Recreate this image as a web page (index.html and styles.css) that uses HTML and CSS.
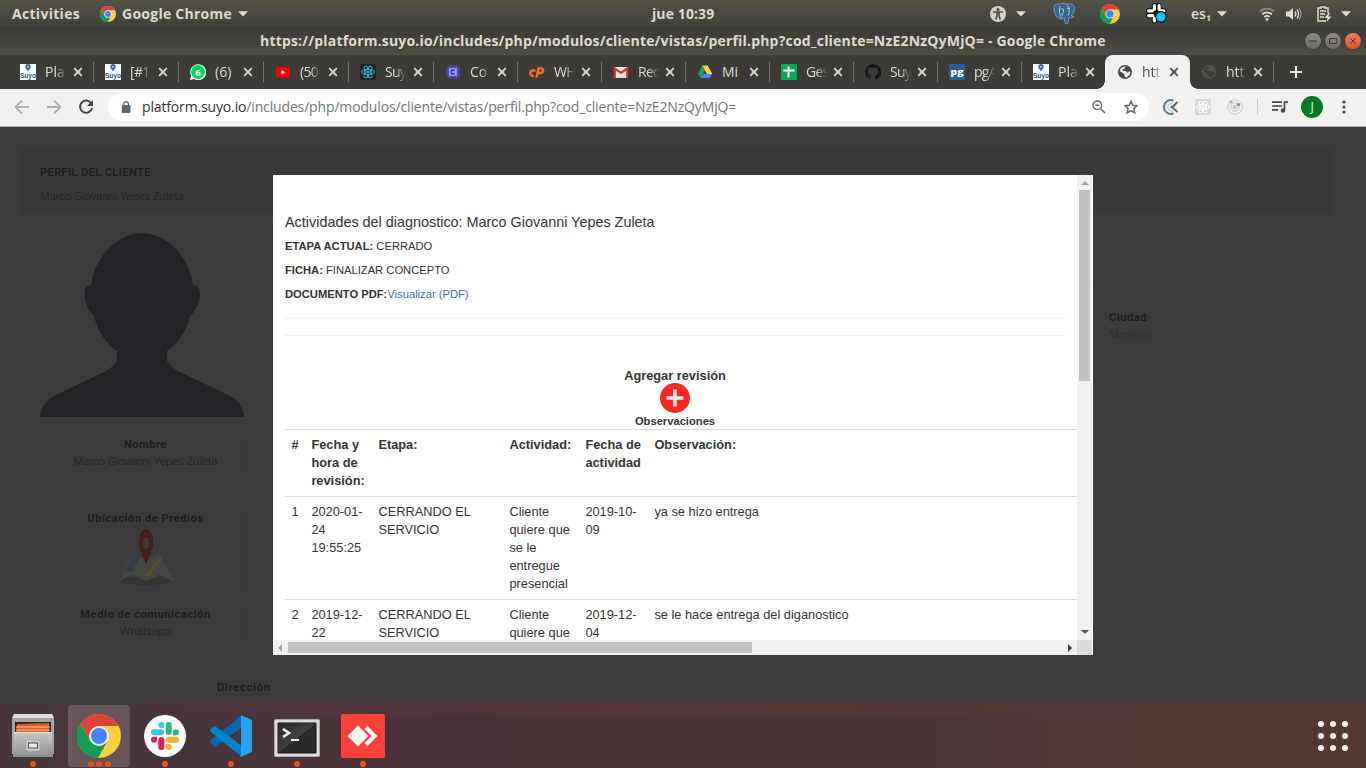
FILE: index.html
```html
<!DOCTYPE html>
<html lang="es">
<head>
<meta charset="utf-8">
<title>Perfil del cliente</title>
<link rel="stylesheet" href="styles.css">
</head>
<body>
<svg class="defs" width="0" height="0">
  <symbol id="chrome" viewBox="2 2 44 44"><circle cx="24" cy="24" r="22" fill="#ffcd40"/><path d="M5.500 12A22 22 0 0 0 22.900 46L32.660 29 24 24 15.340 29Z" fill="#109d58"/><path d="M5.500 12A22 22 0 0 1 43.600 14H24L15.340 29Z" fill="#db4437"/><circle cx="24" cy="24" r="10" fill="#f4f4f4"/><circle cx="24" cy="24" r="8" fill="#4285f4"/></symbol>
  <symbol id="close" viewBox="0 0 10 10"><path d="M1.200 1.200l7.600 7.600M8.800 1.200L1.200 8.800" stroke="currentColor" stroke-width="1.800" fill="none"/></symbol>
  <symbol id="down" viewBox="0 0 10 6"><path d="M0 .3h10L5 5.500z" fill="currentColor"/></symbol>
  <symbol id="globe" viewBox="0 0 16 16"><circle cx="8" cy="8" r="7" fill="currentColor"/><path d="M8.600 2.500c-1 1-.3 1.700-1.500 2.200C6 5.300 5.500 5.700 5.600 6.900h3c1 .2.700 1.600 1.800 1.700 1.100 0 .6-1.300 1.900-1.400l1.200 1.100C13 11 11 13.300 8.200 13.500v-1.400c-1.300 0-1-1.200-.8-2.200L2.600 7C3.200 4.500 5.400 2.300 8.600 2.500z" fill="var(--hole)"/></symbol>
  <symbol id="suyo" viewBox="0 0 16 16"><path fill="#fff" d="M0 0h16v16H0z"/><path d="M8 0a2.700 2.700 0 0 1 2.700 2.700C10.700 4.500 8 7 8 7S5.300 4.500 5.300 2.700A2.700 2.700 0 0 1 8 0z" fill="#3565ad"/><circle cx="8" cy="2.700" r="1" fill="#b9cdec"/><text x="0" y="13.700" textLength="16" lengthAdjust="spacingAndGlyphs" font-family="Liberation Sans" font-weight="700" font-size="8" fill="#20519f">Suyo</text></symbol>
  <symbol id="atom" viewBox="0 0 16 16"><g fill="none" stroke="currentColor" stroke-width=".9"><ellipse cx="8" cy="8" rx="6.500" ry="2.500"/><ellipse cx="8" cy="8" rx="6.500" ry="2.500" transform="rotate(60 8 8)"/><ellipse cx="8" cy="8" rx="6.500" ry="2.500" transform="rotate(120 8 8)"/></g><circle cx="8" cy="8" r="1.300" fill="currentColor"/></symbol>
</svg>

<header class="panel">
  <span class="activities">Activities</span>
  <svg class="panel-chrome"><use href="#chrome"/></svg>
  <span class="app-name">Google Chrome</span>
  <svg class="caret"><use href="#down"/></svg>
  <span class="clock">jue 10:39</span>
  <svg class="access" viewBox="0 0 16 16"><circle cx="8" cy="8" r="8" fill="#d5d2cc"/><circle cx="8" cy="3.500" r="1.500" fill="#494741"/><path d="M3.500 6h9M7 6.500v3L6 13M9 6.500v3l1 3.500" stroke="#494741" stroke-width="1.600" fill="none" stroke-linecap="round"/></svg>
  <svg class="caret c2"><use href="#down"/></svg>
  <svg class="pg" viewBox="0 0 22 22"><path d="M7 1C3 .5 1 2 1 5c0 3 1.300 8 3.500 9.500 1.500.8 2.500-1 3.500-2l.6 2.200-2 .8c1.700 1.200 3.800.2 4.800-.7.300 2 .200 6.200 2 6.200 2.200 0 2-3.500 2.200-6.500 1 .9 4.800.4 5.400-1.200l-2.800-.3C20.800 10.500 22 6 21 3.500 19.500.5 15.500.5 13.500 1 11 .2 9 .4 7 1z" fill="#336791" stroke="#b4c3d0" stroke-width=".6"/><path d="M7.700 12.500c-2-2.500-1.500-6-.7-9.500M13.500 1.500c3 2.500 3.500 7 1.800 11M7.500 6c2-1 3.200.2 3 2.500-.2 1.500-1.500 2-1.200 4M14 5.500l2.700.3" fill="none" stroke="#d5dfe7" stroke-width=".8"/></svg>
  <svg class="tray-chrome"><use href="#chrome"/></svg>
  <svg class="tray-slack" viewBox="0 0 20 20"><g stroke="#111" stroke-width="5" stroke-linecap="round"><path d="M8 2.500V8M2.500 7.500H5M12 7V2.500M12.500 7.500H17M2.500 12H7.500M8 12.500V17"/></g><g stroke="#fff" stroke-width="3" stroke-linecap="round"><path d="M8 2.500V6M2.500 7.500H6M12.500 6V2.500M14.500 7.500H17M2.500 12H6.500M8 14.500V17"/></g><circle cx="14.300" cy="13.200" r="5" fill="#10c8f5" stroke="#111"/></svg>
  <span class="lang">es₁</span>
  <svg class="caret c3"><use href="#down"/></svg>
  <svg class="wifi" viewBox="0 0 16 14"><g fill="none" stroke-width="1.800"><path d="M1 4.500a10 10 0 0 1 14 0" stroke="#8d8a84"/><path d="M3.200 7.300a7 7 0 0 1 9.600 0M5.300 10a4 4 0 0 1 5.400 0" stroke="#dfdbd2"/></g><circle cx="8" cy="12.500" r="1.400" fill="#dfdbd2"/></svg>
  <svg class="vol" viewBox="0 0 16 14"><path d="M0 4.500h3L7 1v12L3 9.500H0z" fill="#dfdbd2"/><g fill="none" stroke="#dfdbd2" stroke-width="1.300"><path d="M9 4.500q1.800 2.500 0 5M11 2.500q3 4.500 0 9"/><path d="M13 1q3.800 6 0 12" stroke="#908d87"/></g></svg>
  <svg class="bat" viewBox="0 0 15 16"><path d="M11 7V2H8V1H4v1H1v13h8" fill="none" stroke="#dfdbd2" stroke-width="1.500"/><path d="M3 5h6M3 8h5M3 11h4" stroke="#dfdbd2" stroke-width="1.500"/><path d="M11.500 7L7.500 12h3l-1 4 5-5.500h-3.200L13 7z" fill="#dfdbd2"/></svg>
  <svg class="caret c4"><use href="#down"/></svg>
</header>

<div class="titlebar">
  <span class="title">https://platform.suyo.io/includes/php/modulos/cliente/vistas/perfil.php?cod_cliente=NzE2NzQyMjQ= - Google Chrome</span>
  <div class="wm">
    <i class="wm-btn"><svg viewBox="0 0 16 16"><path d="M4 8h8"/></svg></i>
    <i class="wm-btn"><svg viewBox="0 0 16 16"><path d="M4.500 5.500h7v5h-7z"/></svg></i>
    <i class="wm-btn wm-close"><svg viewBox="0 0 16 16"><path d="M5.200 5.200l5.600 5.600M10.800 5.200l-5.600 5.600"/></svg></i>
  </div>
</div>

<nav class="tabs">
  <div class="tab wide first"><svg class="fav"><use href="#suyo"/></svg><span class="label">Pla</span><svg class="x"><use href="#close"/></svg></div>
  <div class="tab wide"><svg class="fav"><use href="#suyo"/></svg><span class="label tight">[#1</span><svg class="x"><use href="#close"/></svg></div>
  <div class="tab wide"><svg class="fav" viewBox="0 0 16 16"><path d="M0 16l1.200-4A8 8 0 1 1 4 15z" fill="#fff"/><circle cx="8" cy="8" r="6.900" fill="#05d85e"/><text x="5.300" y="11.500" font-family="Open Sans" font-size="9.500" font-weight="700" fill="#fff">6</text></svg><span class="label solid">(6)</span><svg class="x"><use href="#close"/></svg></div>
  <div class="tab wide"><svg class="fav" viewBox="0 0 16 16"><rect x="1" y="3" width="14" height="10.500" rx="2.300" fill="#f00"/><path d="M6.500 6v4.500l4-2.250z" fill="#fff"/></svg><span class="label tight">(50</span><svg class="x"><use href="#close"/></svg></div>
  <div class="tab wide"><svg class="fav react" viewBox="0 0 16 16"><rect width="16" height="16" rx="1.500" fill="#20242a"/><use href="#atom"/></svg><span class="label tight">Suy</span><svg class="x"><use href="#close"/></svg></div>
  <div class="tab"><svg class="fav" viewBox="0 0 16 16"><g fill="none" stroke="#5650d8"><path d="M4.500 1v14M6.800 1v14M9.200 1v14M11.500 1v14M1 4.500h14M1 6.800h14M1 9.200h14M1 11.500h14" stroke-width=".9"/><rect x="3.500" y="3.500" width="9" height="9" rx="1" fill="#a5a3f2" stroke-width="1.700"/><path d="M9.700 6.300H6.500v3.400h3.200" stroke="#302ba9" stroke-width="1.500"/></g></svg><span class="label">Co</span><svg class="x"><use href="#close"/></svg></div>
  <div class="tab"><svg class="fav" viewBox="0 0 16 16"><path d="M6.500 6.500H4C.500 6.500.500 12 3.500 12h1.200M7.300 13.500L9.700 4.200h2c3.700 0 3 4.800-.5 4.800H9.500" fill="none" stroke="#ff6c2c" stroke-width="2.400"/></svg><span class="label tight">WH</span><svg class="x"><use href="#close"/></svg></div>
  <div class="tab"><svg class="fav" viewBox="0 0 16 16"><path d="M1 3h14v11H1z" fill="#eee"/><path d="M1.800 14V4.500L8 9l6.200-4.500V14" fill="none" stroke="#d9332a" stroke-width="2.200"/><path d="M3 14L8 9.500l5 4.500z" fill="#dedede"/></svg><span class="label tight">Rec</span><svg class="x"><use href="#close"/></svg></div>
  <div class="tab"><svg class="fav" viewBox="0 0 16 16"><path d="M5.300 1.500L8 6 3.700 14 1 9.800z" fill="#11a861"/><path d="M5.300 1.500h5.400L15.300 10H10z" fill="#ffd04b"/><path d="M3.700 14L6.200 10h9L12.800 14z" fill="#4688f4"/></svg><span class="label solid">Mi</span><svg class="x"><use href="#close"/></svg></div>
  <div class="tab"><svg class="fav" viewBox="0 0 16 16"><rect width="16" height="16" rx="1" fill="#0aa85c"/><path d="M7.500 2.500v11M2.500 6.500h11" stroke="#fff" stroke-width="2"/></svg><span class="label tight">Ges</span><svg class="x"><use href="#close"/></svg></div>
  <div class="tab"><svg class="fav" viewBox="0 0 16 16"><path d="M8 0a8 8 0 0 0-2.500 15.600c.4.100.5-.2.500-.4v-1.500c-2.200.5-2.700-1-2.700-1-.4-.9-.9-1.100-.9-1.100-.7-.5.100-.5.100-.5.800.1 1.200.8 1.200.8.700 1.300 1.900.9 2.400.7 0-.5.300-.9.500-1.100-1.800-.2-3.600-.9-3.600-4 0-.8.300-1.500.8-2.100-.1-.2-.4-1 .1-2.100 0 0 .7-.2 2.200.8a7.700 7.700 0 0 1 4 0c1.500-1 2.200-.8 2.200-.8.500 1.100.2 1.900.1 2.100.5.600.8 1.300.8 2.100 0 3.100-1.900 3.800-3.700 4 .3.300.6.800.6 1.500v2.200c0 .2.100.5.500.4A8 8 0 0 0 8 0z" fill="#15181a"/></svg><span class="label tight">Suy</span><svg class="x"><use href="#close"/></svg></div>
  <div class="tab"><svg class="fav" viewBox="0 0 16 16"><rect width="16" height="16" rx="1.500" fill="#2c5d99"/><text x="1.500" y="10.500" font-family="Open Sans" font-size="9.500" font-weight="800" textLength="13" lengthAdjust="spacingAndGlyphs" fill="#fff">pg</text></svg><span class="label tight">pgA</span><svg class="x"><use href="#close"/></svg></div>
  <div class="tab"><svg class="fav"><use href="#suyo"/></svg><span class="label">Pla</span><svg class="x"><use href="#close"/></svg></div>
  <div class="tab active"><svg class="fav globe"><use href="#globe"/></svg><span class="label">htt</span><svg class="x"><use href="#close"/></svg></div>
  <div class="tab after"><svg class="fav globe"><use href="#globe"/></svg><span class="label">htt</span><svg class="x"><use href="#close"/></svg></div>
  <div class="newtab"><svg viewBox="0 0 12 12"><path d="M6 0v12M0 6h12" stroke="#e7e5e1" stroke-width="2"/></svg></div>
</nav>

<div class="toolbar">
  <svg class="nav" viewBox="0 0 16 16"><path d="M15 8H2M8 1.500L1.500 8 8 14.500"/></svg>
  <svg class="nav" viewBox="0 0 16 16"><path d="M1 8h13M8 1.500L14.500 8 8 14.500"/></svg>
  <svg class="nav reload" viewBox="0 0 16 16"><path d="M13.200 4.200A6.100 6.100 0 1 0 14.100 9"/><path d="M15 1v6H9z" fill="#454545" stroke="none"/></svg>
  <div class="omnibox">
    <svg class="lock" viewBox="0 0 10 12"><rect x=".8" y="4" width="8.600" height="8" rx="1" fill="#5f6368"/><path d="M2.800 5V3a2.300 2.300 0 0 1 4.600 0v2" fill="none" stroke="#5f6368" stroke-width="1.200"/></svg>
    <span class="url"><b>platform.suyo.io</b>/includes/php/modulos/cliente/vistas/perfil.php?cod_cliente=NzE2NzQyMjQ=</span>
    <svg class="lens" viewBox="0 0 14 14"><circle cx="5.300" cy="5.300" r="4.300"/><path d="M8.500 8.500L13 13M3.300 5.300h4"/></svg>
    <svg class="star" viewBox="0 0 14 14"><path d="M7 1.200l1.700 4.100 4.400.4-3.300 2.900 1 4.300L7 10.600l-3.800 2.300 1-4.300L.9 5.700l4.400-.4z"/></svg>
  </div>
  <svg class="ext1" viewBox="0 0 16 16"><path d="M10.500 1.500A7 7 0 1 0 10.500 14.500" fill="none" stroke="#5b7885" stroke-width="2"/><path d="M10 4.200A4 4 0 1 0 10 11.800" fill="none" stroke="#b4c1c7" stroke-width="1"/><path d="M14.500 3L9.500 8M14.500 13L10 9" stroke="#4e6975" stroke-width="1.900"/><circle cx="9" cy="8" r="1.600" fill="#4e6975"/></svg>
  <svg class="ext2" viewBox="0 0 16 16"><path d="M0 0h16v16H0z" fill="#d8d8d8"/><use href="#atom"/></svg>
  <svg class="ext3" viewBox="0 0 16 16"><g fill="none" stroke="#c7c7c7"><circle cx="8" cy="8" r="7.300"/><circle cx="8" cy="8" r="4.300"/></g><circle cx="8" cy="8" r="2.500" fill="#ccc"/><circle cx="4" cy="3" r="1.500" fill="#aaa"/><circle cx="11.500" cy="5.500" r="1.600" fill="#888"/></svg>
  <i class="divider"></i>
  <svg class="queue" viewBox="0 0 16 12"><path d="M0 1.200h10M0 5h10M0 8.800h6M16 1.200h-3.500v8" fill="none" stroke="#454545" stroke-width="1.700"/><circle cx="11" cy="9.500" r="2.200" fill="#454545"/></svg>
  <span class="profile">J</span>
  <svg class="menu" viewBox="0 0 4 14"><circle cx="2" cy="2" r="1.600"/><circle cx="2" cy="7" r="1.600"/><circle cx="2" cy="12" r="1.600"/></svg>
</div>

<main class="page">
  <section class="band"><h1>PERFIL DEL CLIENTE</h1><p>Marco Giovanni Yepes Zuleta</p></section>
  <div class="content">
    <aside class="side">
      <svg class="avatar" viewBox="0 0 204 184"><path d="M102 0C125 0 149 22 153 52c5 0 7 4 7 11-1 8-5 16-10 20-3 14-12 28-23 35v10c5 6 7 8 13 11l48 23c11 5 15 12 16 22v10H0v-10c1-10 5-16 16-22l48-23c6-3 8-5 13-11v-10C66 111 57 97 54 83c-5-4-9-12-9-20-1-7 1-11 6-11C55 22 79 0 102 0z" fill="#222327"/></svg>
      <div class="field name"><strong>Nombre</strong><span>Marco Giovanni Yepes Zuleta</span></div>
      <i class="rule"></i>
      <div class="field place"><strong>Ubicación de Predios</strong>
        <svg class="map" viewBox="0 0 56 60"><ellipse cx="28" cy="53" rx="26" ry="4" fill="#353535"/><path d="M14 27L28 30 42 26 55 53 42 47 28 53 14 47 1 53z" fill="#454743"/><path d="M14 27l8 1-6 15-9 2z" fill="#353c46"/><path d="M22 30l6 3v19L14 46z" fill="#434940"/><path d="M28 30l14-3 13 26-13-6-14 6z" fill="#454541"/><path d="M43 31L28 49" stroke="#594e2d" stroke-width="3" stroke-dasharray="4 1"/><path fill-rule="evenodd" d="M28 1c4 0 7 5 7 14 0 7-4 14-7 21-3-7-7-14-7-21 0-9 3-14 7-14zm0 8c-2 0-3 2-3 6s1 6 3 6 3-2 3-6-1-6-3-6z" fill="#431e1f"/></svg>
      </div>
      <div class="field medium"><strong>Medio de comunicación</strong><span>Whatsapp</span></div>
    </aside>
    <div class="city-col">
      <i class="rule"></i>
      <div class="city"><strong>Ciudad</strong><span>Medellín</span></div>
    </div>
  </div>
  <strong class="address">Dirección</strong>

  <div class="modal">
    <div class="modal-body">
      <h2>Actividades del diagnostico: Marco Giovanni Yepes Zuleta</h2>
      <p><b>ETAPA ACTUAL:</b> CERRADO</p>
      <p><b>FICHA:</b> FINALIZAR CONCEPTO</p>
      <p><b>DOCUMENTO PDF:</b><a>Visualizar (PDF)</a></p>
      <hr><hr>
      <div class="add">
        <strong>Agregar revisión</strong>
        <svg viewBox="0 0 30 30"><circle cx="15" cy="15" r="15" fill="#fb2722"/><path d="M15 6.500v17M6.500 15h17" stroke="#f3ecec" stroke-width="3.600"/></svg>
        <b>Observaciones</b>
      </div>
      <table>
        <colgroup><col class="c-num"><col class="c-date"><col class="c-stage"><col class="c-act"><col class="c-adate"><col></colgroup>
        <tr><th>#</th><th>Fecha y hora de revisión:</th><th>Etapa:</th><th>Actividad:</th><th>Fecha de actividad</th><th>Observación:</th></tr>
        <tr><td>1</td><td>2020-01-24 19:55:25</td><td>CERRANDO EL SERVICIO</td><td>Cliente quiere que se le entregue presencial</td><td>2019-10-09</td><td>ya se hizo entrega</td></tr>
        <tr><td>2</td><td>2019-12-22</td><td>CERRANDO EL SERVICIO</td><td>Cliente quiere que</td><td>2019-12-04</td><td>se le hace entrega del diganostico</td></tr>
      </table>
    </div>
    <div class="vbar"><svg viewBox="0 0 8 4"><path d="M0 4h8L4 0z" fill="#a3a3a3"/></svg><i></i><svg class="end" viewBox="0 0 8 4"><path d="M0 0h8L4 4z" fill="#505050"/></svg></div>
    <div class="hbar"><svg viewBox="0 0 4 8"><path d="M4 0v8L0 4z" fill="#a3a3a3"/></svg><i></i><svg class="end" viewBox="0 0 4 8"><path d="M0 0v8l4-4z" fill="#404040"/></svg></div>
    <div class="corner"></div>
  </div>
</main>

<footer class="dock">
  <div class="app"><svg viewBox="0 0 44 44"><defs><linearGradient id="g" x2="0" y2="1"><stop stop-color="#c9c9c9"/><stop offset="1" stop-color="#8f8f8f"/></linearGradient></defs><path d="M3 0h38l2 5v35H1V5z" fill="#a5a5a5"/><path d="M3 0h38l2 4H1z" fill="#ddd"/><path d="M4 8h36v11H4z" fill="#292522"/><path d="M6 10l32-1v9H5z" fill="#d95d24"/><path d="M5 13h34" stroke="#ffc583"/><path d="M5 16h34" stroke="#ffe0b8" stroke-width=".8"/><path d="M3 18h38l1 25H2z" fill="url(#g)"/><path d="M3 18.500h38" stroke="#e4e4e4"/><rect x="15" y="26" width="14" height="11" rx="2" fill="#cdcdcd" stroke="#aaa" stroke-width=".6"/><rect x="17.500" y="29" width="9" height="5" fill="#eee" stroke="#444"/></svg><i class="dots"><b></b></i></div>
  <div class="app selected"><svg><use href="#chrome"/></svg><i class="dots"><b></b><b></b><b></b></i></div>
  <div class="app"><svg viewBox="0 0 44 44"><circle cx="22" cy="22" r="21" fill="#fff"/><g stroke-width="6" stroke-linecap="round"><path d="M11 18.300h7M18.300 11v0" stroke="#36c5f0"/><path d="M25.700 11v7M33 18.300v0" stroke="#2eb67d"/><path d="M26 25.700h7M25.700 33v0" stroke="#ecb22e"/><path d="M18.300 26v7M11 25.700v0" stroke="#e01e5a"/></g><path d="M18.300 11h3v3h-3z" fill="#36c5f0"/><path d="M30 18.300h3v3h-3z" fill="#2eb67d"/><path d="M22.700 30h3v3h-3z" fill="#ecb22e"/><path d="M11 22.700h3v3h-3z" fill="#e01e5a"/></svg><i class="dots"><b></b></i></div>
  <div class="app"><svg viewBox="0 0 44 44"><path d="M33 1v12L6 33l-4-4c-1-1-1-2 0-3z" fill="#0069b3"/><path d="M1 15l5-3 27 20v11L2 18c-1-1-1-2-1-3z" fill="#0083cd"/><path d="M32 1l11 5v32l-11 5c-1 0-1-1 0-2V3z" fill="#27a2ee"/></svg><i class="dots"><b></b></i></div>
  <div class="app"><svg viewBox="0 0 46 44"><defs><linearGradient id="t" x2="1" y2="1"><stop stop-color="#2b2b2b"/><stop offset=".5" stop-color="#414141"/><stop offset=".51" stop-color="#292929"/></linearGradient></defs><rect x=".5" y="5.500" width="45" height="37" rx="1" fill="#dcdcdc" stroke="#aaa"/><path d="M4 9h38v30H4z" fill="url(#t)" stroke="#171717"/><path d="M9 15l6 4-6 4" fill="none" stroke="#eee" stroke-width="2.700"/><path d="M17 26h8" stroke="#eee" stroke-width="2"/></svg><i class="dots"><b></b></i></div>
  <div class="app"><svg viewBox="0 0 44 44"><rect width="44" height="44" rx="2.500" fill="#fe4139"/><path d="M17 11.500L27.500 22 17 32.500 6.500 22z" fill="#fff"/><path d="M25 13.500l8.500 8.500-8.500 8.500" fill="none" stroke="#fff" stroke-width="4"/></svg><i class="dots"><b></b></i></div>
  <div class="grid"><b></b><b></b><b></b><b></b><b></b><b></b><b></b><b></b><b></b></div>
</footer>
</body>
</html>
```
FILE: styles.css
```css
* { box-sizing: border-box; }
body { margin: 0; width: 1366px; height: 768px; overflow: hidden; background: #3c3c3c; font-family: "Liberation Sans", Arial, sans-serif; display: flex; flex-direction: column; }
svg { display: block; flex: none; }
.defs { display: none; }

/* Desktop panel */
.panel { height: 27px; flex: none; display: flex; align-items: center; background: linear-gradient(#55524b, #403f3a); color: #dfdbd2; font: 700 14px "Open Sans", sans-serif; white-space: nowrap; }
.panel span { line-height: 27px; flex: none; }
.activities { width: 88px; padding-left: 12px; letter-spacing: .3px; }
.panel-chrome { width: 16px; height: 16px; margin-left: 12px; }
.app-name { margin-left: 6px; width: 111px; letter-spacing: .25px; }
.caret { width: 10px; height: 6px; margin-left: 5px; }
.clock { width: 64px; margin-left: 404px; letter-spacing: .1px; }
.access { width: 16px; height: 16px; margin-left: 274px; }
.c2 { margin-left: 10px; }
.pg { width: 22px; height: 22px; margin-left: 27px; }
.tray-chrome { width: 20px; height: 20px; margin-left: 25px; }
.tray-slack { width: 21px; height: 21px; margin-left: 26px; }
.lang { width: 22px; margin-left: 24px; font-weight: 600; }
.c3 { margin-left: 4px; }
.wifi { width: 16px; height: 14px; margin-left: 32px; }
.vol { width: 16px; height: 14px; margin-left: 11px; }
.bat { width: 15px; height: 16px; margin-left: 15px; }
.c4 { margin-left: 9px; }

/* Window title */
.titlebar { height: 28px; flex: none; display: flex; align-items: center; padding-left: 260px; background: linear-gradient(#3b3a36, #4e4b45); color: #dfdbd2; }
.title { width: 1045px; font: 700 14px/28px "Open Sans", sans-serif; letter-spacing: .19px; white-space: nowrap; }
.wm { display: flex; gap: 4px; }
.wm-btn { width: 16px; height: 16px; border-radius: 50%; background: linear-gradient(#8d8b86, #6c6963); box-shadow: 0 0 0 .5px #302f2c; }
.wm-btn path { fill: none; stroke: #3c3b37; }
.wm-close { background: linear-gradient(#f37e57, #e1501e); }

/* Tabs */
.tabs { height: 34px; flex: none; padding-left: 8px; display: flex; background: #3c3b37; color: #dfdedb; }
.tab { position: relative; width: 84px; display: flex; align-items: center; padding-left: 12px; }
.tab.wide { width: 85px; }
.tab::before { content: ""; position: absolute; left: 0; top: 7px; width: 1px; height: 20px; background: #75736f; }
.first::before, .active::before, .after::before { display: none; }
.fav { width: 16px; height: 16px; }
.react { color: #35b8d8; }
.label { width: 21px; height: 34px; margin-left: 9px; overflow: hidden; white-space: nowrap; font: 14px/34px "Open Sans", sans-serif; -webkit-mask-image: linear-gradient(90deg, #000 50%, transparent); mask-image: linear-gradient(90deg, #000 50%, transparent); }
.label.solid { -webkit-mask-image: none; mask-image: none; }
.label.tight { letter-spacing: -.7px; }
.x { width: 10px; height: 10px; margin-left: 6px; }
.wide .x { margin-left: 7px; }
.tab.active { width: 85px; background: #f2f1f0; border-radius: 8px 8px 0 0; color: #4b4a48; }
.globe { color: #4b4a48; --hole: #f2f1f0; }
.after .globe { color: #50504d; --hole: #3c3b37; }
.after { width: 83px; padding-left: 11px; }
.active::after { content: ""; position: absolute; bottom: 0; left: -8px; width: 101px; height: 8px; background: radial-gradient(circle at 0 0, transparent 7.5px, #f2f1f0 8px) left / 8px 8px no-repeat, radial-gradient(circle at 100% 0, transparent 7.5px, #f2f1f0 8px) right / 8px 8px no-repeat; }
.newtab { display: flex; align-items: center; padding-left: 16px; border-left: 1px solid #75736f; height: 20px; margin-top: 7px; }
.newtab svg { width: 12px; height: 12px; }

/* Address bar */
.toolbar { height: 38px; flex: none; display: flex; align-items: center; padding: 0 0 2px 14px; background: #f2f1f0; border-bottom: 1px solid #b8b6b3; }
.nav { width: 16px; height: 16px; margin-right: 16px; fill: none; stroke: #b0afae; stroke-width: 1.9; }
.reload { stroke: #454545; margin-right: 14px; }
.omnibox { width: 1041px; height: 28px; border-radius: 14px; background: #fff; display: flex; align-items: center; padding-left: 13px; }
.lock { width: 10px; height: 12px; }
.url { width: 950px; margin-left: 11px; font: 14px/28px "Open Sans", sans-serif; letter-spacing: -.15px; color: #70757a; white-space: nowrap; }
.url b { font-weight: 400; color: #303134; }
.lens, .star { width: 14px; height: 14px; fill: none; stroke: #5f6368; stroke-width: 1.4; }
.star { margin-left: 18px; }
.ext1 { width: 16px; height: 16px; margin-left: 14px; }
.ext2 { width: 16px; height: 16px; margin-left: 16px; color: #fff; }
.ext3 { width: 16px; height: 16px; margin-left: 16px; }
.divider { width: 1px; height: 16px; margin-left: 14px; background: #ccc; }
.queue { width: 16px; height: 12px; margin-left: 14px; }
.profile { width: 22px; height: 22px; margin-left: 13px; border-radius: 50%; background: #067a27; color: #fff; font: 12px/22px "Open Sans", sans-serif; text-align: center; }
.menu { width: 4px; height: 14px; margin-left: 19px; fill: #454545; }

/* Dimmed profile page */
.page { position: relative; height: 576px; flex: none; padding: 21px 35px 0 20px; background: #3c3c3c; color: #202020; font: 300 11.2px/17px Roboto, sans-serif; }
.page strong { font-weight: 700; color: #1e1e1e; letter-spacing: .5px; }
.band { height: 65px; background: #393939; padding: 16px 20px 0; }
.band h1 { margin: 0; font-size: 11.2px; line-height: 17px; font-weight: 600; color: #1d1d1d; letter-spacing: .32px; }
.band p { margin: 7px 0 0; letter-spacing: .06px; }
.content { display: flex; justify-content: space-between; padding: 20px 0 0 20px; }
.side { width: 204px; }
.avatar { width: 204px; height: 184px; }
.field { margin-left: 8px; width: 196px; display: flex; flex-direction: column; align-items: center; border-right: 1px solid #383838; white-space: nowrap; letter-spacing: .06px; }
.rule { display: block; height: 1px; background: #393939; }
.side .rule { width: 300px; margin: 14px 0 0 22px; }
.name { margin-top: 19px; height: 42px; }
.place { margin-top: 17px; height: 88px; }
.map { width: 56px; height: 60px; margin-top: 1px; }
.medium { margin-top: 8px; height: 41px; }
.city-col { width: 239px; padding-top: 52px; }
.city-col .rule { width: 198px; }
.city { margin-top: 23px; padding-left: 16px; height: 42px; display: flex; flex-direction: column; border-left: 1px solid #383838; }
.city span { color: #2d2d2d; letter-spacing: .25px; }
.address { display: block; margin: 32px 0 0 197px; }
.page .address { letter-spacing: .7px; }

/* Activity dialog */
.modal { position: absolute; left: 273px; top: 48px; width: 820px; height: 480px; padding-right: 1px; background: #fff; color: #333; display: grid; grid-template: 465px 15px / 804px 15px; font: 12.8px/18px "Liberation Sans", Arial, sans-serif; }
.modal-body { overflow: hidden; padding: 37px 0 0 12px; }
.modal h2 { margin: 0 0 6px; font-size: 14.4px; line-height: 20px; font-weight: 400; }
.modal p { margin: 0 0 8px; font-size: 11.2px; line-height: 16px; }
.modal a { color: #3c6fc0; }
.modal hr { width: 780px; border: 0; border-top: 1px solid #eee; margin: 16px 0 0; }
.add { width: 780px; margin-top: 31px; display: flex; flex-direction: column; align-items: center; }
.add strong { color: #333; line-height: 18px; height: 16px; letter-spacing: 0; }
.add svg { width: 30px; height: 30px; }
.add b { font-size: 11.2px; line-height: 16px; }
.modal table { width: 1260px; table-layout: fixed; border-collapse: separate; border-spacing: 0; }
.c-num { width: 20px; } .c-date { width: 67px; } .c-stage { width: 131px; } .c-act { width: 76px; } .c-adate { width: 69px; }
th, td { border-top: 1px solid #ddd; padding: 6px 6.4px; text-align: left; vertical-align: top; }
.vbar, .hbar { background: #f1f1f1; display: flex; align-items: center; }
.vbar { flex-direction: column; padding: 6px 0; }
.vbar svg { width: 8px; height: 4px; }
.vbar i { width: 11px; height: 191px; margin-top: 5px; background: #c1c1c1; }
.hbar { padding: 0 5px; }
.hbar svg { width: 4px; height: 8px; }
.hbar i { width: 464px; height: 11px; margin-left: 6px; background: #c1c1c1; }
.vbar .end { margin-top: auto; }
.hbar .end { margin-left: auto; }
.corner { background: #dcdcdc; }

/* Dock */
.dock { height: 65px; flex: none; display: flex; padding: 2px 14px 0 2px; background: linear-gradient(90deg, transparent 100px, rgba(90, 50, 62, .55) 410px, rgba(88, 54, 56, .7) 800px, transparent 1140px) top / 100% 13px no-repeat, linear-gradient(90deg, #46363a, #4a3338 30%, #4a3337 65%, #533537 78%, #54382f 92%, #543831); }
.app { width: 62px; height: 62px; margin-right: 4px; border-radius: 3px; display: flex; flex-direction: column; align-items: center; padding-top: 9px; }
.app > svg { width: 46px; height: 44px; }
.selected { background: #665659; }
.dots { display: flex; gap: 2.5px; margin-top: 3px; }
.dots b { width: 6px; height: 6px; border-radius: 50%; background: #e95420; }
.grid { margin: 16px 0 0 auto; width: 34px; height: 32px; display: grid; grid-template-columns: repeat(3, 6px); gap: 6px; align-content: start; }
.grid b { width: 6px; height: 6px; border-radius: 50%; background: #eee; }
```
